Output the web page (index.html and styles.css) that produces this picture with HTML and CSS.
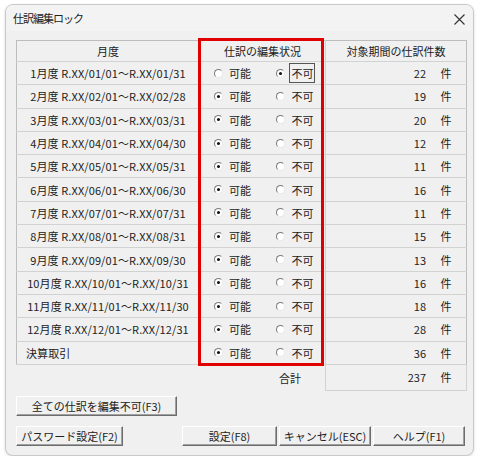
FILE: index.html
```html
<!DOCTYPE html>
<html lang="ja">
<head>
    <meta charset="UTF-8">
    <meta name="viewport" content="width=device-width, initial-scale=1.0">
    <title>仕訳編集ロック</title>
    <link rel="stylesheet" href="styles.css">
</head>
<body>
    <div class="dialog">
        <div class="titlebar">
            <span class="title">仕訳編集ロック</span>
            <span class="close">
                <svg width="11" height="11" viewBox="0 0 11 11"><path d="M0.5 0.5 L10.5 10.5 M10.5 0.5 L0.5 10.5" stroke="#333" stroke-width="1.1" fill="none"/></svg>
            </span>
        </div>

        <div class="content">
            <div class="grid-wrap">
                <table class="lock-table">
                    <colgroup>
                        <col class="col-month">
                        <col class="col-state">
                        <col class="col-count">
                    </colgroup>
                    <thead>
                        <tr>
                            <th>月度</th>
                            <th>仕訳の編集状況</th>
                            <th>対象期間の仕訳件数</th>
                        </tr>
                    </thead>
                    <tbody id="rows"></tbody>
                    <tfoot>
                        <tr>
                            <td class="blank"></td>
                            <td class="total-label">合計</td>
                            <td class="count total-count"><span class="num">237</span><span class="unit">件</span></td>
                        </tr>
                    </tfoot>
                </table>
                <div class="state-frame"></div>
            </div>

            <div class="btn-row first">
                <button class="btn btn-lock">全ての仕訳を編集不可(F3)</button>
            </div>
            <div class="btn-row last">
                <button class="btn btn-pass">パスワード設定(F2)</button>
                <span class="spacer"></span>
                <button class="btn btn-ok">設定(F8)</button>
                <button class="btn btn-cancel">キャンセル(ESC)</button>
                <button class="btn btn-help">ヘルプ(F1)</button>
            </div>
        </div>
    </div>

    <script>
        const months = [
            ['1月度 R.XX/01/01～R.XX/01/31', false, 22],
            ['2月度 R.XX/02/01～R.XX/02/28', true, 19],
            ['3月度 R.XX/03/01～R.XX/03/31', true, 20],
            ['4月度 R.XX/04/01～R.XX/04/30', true, 12],
            ['5月度 R.XX/05/01～R.XX/05/31', true, 11],
            ['6月度 R.XX/06/01～R.XX/06/30', true, 16],
            ['7月度 R.XX/07/01～R.XX/07/31', true, 11],
            ['8月度 R.XX/08/01～R.XX/08/31', true, 15],
            ['9月度 R.XX/09/01～R.XX/09/30', true, 13],
            ['10月度 R.XX/10/01～R.XX/10/31', true, 16],
            ['11月度 R.XX/11/01～R.XX/11/30', true, 18],
            ['12月度 R.XX/12/01～R.XX/12/31', true, 28],
            ['決算取引', true, 36]
        ];

        const tbody = document.getElementById('rows');

        months.forEach(([label, editable, count], i) => {
            const tr = document.createElement('tr');
            const cls = label === '決算取引' ? 'month closing' : 'month';
            // only the first row's 不可 has keyboard focus
            const ngClass = i === 0 ? 'txt focus' : 'txt';
            tr.innerHTML = `
                <td class="${cls}">${label}</td>
                <td class="state">
                    <label class="radio"><span class="dot${editable ? ' on' : ''}"></span><span class="txt">可能</span></label>
                    <label class="radio"><span class="dot${editable ? '' : ' on'}"></span><span class="${ngClass}">不可</span></label>
                </td>
                <td class="count"><span class="num">${count}</span><span class="unit">件</span></td>`;
            tbody.appendChild(tr);
        });
    </script>
</body>
</html>
```

FILE: styles.css
```css
body {
    margin: 0;
    background-color: #fff;
    font-family: "Noto Sans CJK JP", "Liberation Sans", sans-serif;
    font-size: 11px;
    color: #222;
}

.dialog {
    margin: 4px 0 0 5px;
    width: 467px;
    height: 450px;
    background-color: #f0f0f0;
    border: 1px solid #c9c9c9;
    border-radius: 8px;
    box-shadow: 0 1px 3px rgba(0, 0, 0, 0.15);
    overflow: hidden;
}

.titlebar {
    height: 26px;
    display: flex;
    align-items: center;
    justify-content: space-between;
    padding: 0 8px 0 7px;
    background-color: #f3f3f3;
}

.title {
    font-size: 11px;
    letter-spacing: -1px;
}

.close {
    display: flex;
    margin-top: 2px;
}

.content {
    padding: 9px 8px 0 10px;
}

/* grid */
.grid-wrap {
    position: relative;
    width: 450px;
}

.lock-table {
    width: 450px;
    border-collapse: collapse;
    table-layout: fixed;
}

.col-month { width: 183px; }
.col-state { width: 126px; }
.col-count { width: 141px; }

.lock-table th,
.lock-table td {
    padding: 0;
    border: 1px solid #d2d2d2;
    white-space: nowrap;
}

.lock-table th {
    height: 20px;
    font-weight: normal;
    text-align: center;
    border-top-color: #bdbdbd;
}

.lock-table tbody td {
    height: 22.3px;
}

.lock-table tbody tr td:first-child,
.lock-table thead th:first-child {
    border-left-color: #bdbdbd;
}

.lock-table tbody tr td:last-child,
.lock-table thead th:last-child {
    border-right-color: #bdbdbd;
}

.month {
    text-align: center;
    letter-spacing: 0.1px;
}

.month.closing {
    text-align: left;
    padding-left: 9px !important;
}

.state {
    padding-left: 14px !important;
}

.radio {
    display: inline-flex;
    align-items: center;
    gap: 5px;
    width: 60px;
}

.dot {
    width: 7px;
    height: 7px;
    border-radius: 50%;
    border: 1px solid;
    border-color: #7a7a7a #e8e8e8 #e8e8e8 #7a7a7a;
    background-color: #fff;
    position: relative;
}

.dot.on::after {
    content: "";
    position: absolute;
    left: 2px;
    top: 2px;
    width: 3px;
    height: 3px;
    border-radius: 50%;
    background-color: #111;
}

.txt {
    padding: 1px 1px;
}

.txt.focus {
    outline: 1px solid #555;
}

.count {
    text-align: right;
}

.num {
    display: inline-block;
    width: 97px;
    text-align: right;
}

.unit {
    display: inline-block;
    width: 40px;
    text-align: center;
}

.lock-table tfoot td {
    height: 25px;
    border: none;
}

.total-label {
    text-align: right;
    padding-right: 24px !important;
}

.lock-table tfoot .total-count {
    border: 1px solid #d2d2d2;
    border-top: none;
}

/* red highlight round the edit-state column */
.state-frame {
    position: absolute;
    left: 182px;
    top: -2px;
    width: 120px;
    height: 322px;
    border: 3px solid #e00000;
    pointer-events: none;
}

/* buttons */
.btn-row {
    display: flex;
    gap: 2px;
}

.btn-row.first {
    margin-top: 5px;
}

.btn-row.last {
    margin-top: 10px;
}

.spacer {
    flex: 1;
}

.btn {
    height: 20px;
    padding: 0;
    font-family: inherit;
    font-size: 11px;
    color: #222;
    background-color: #f0f0f0;
    border: 1px solid;
    border-color: #fff #6d6d6d #6d6d6d #fff;
    box-shadow: inset -1px -1px 0 #a0a0a0;
}

.btn-lock { width: 161px; }
.btn-pass { width: 107px; }
.btn-ok { width: 95px; }
.btn-cancel { width: 92px; }
.btn-help { width: 92px; }
```
